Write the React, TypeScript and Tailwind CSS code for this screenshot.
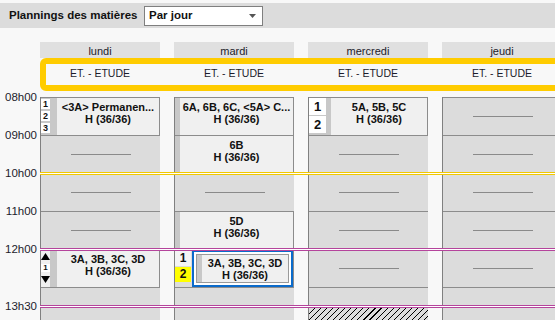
import React from "react";

const days = ["lundi", "mardi", "mercredi", "jeudi"];

function Dash() {
  return <div className="w-[60px] h-px bg-[#8a8a8a]" />;
}

function Slot38() {
  return (
    <div className="h-[38px] shrink-0 border-t border-[#8c8c8c] flex items-center justify-center">
      <Dash />
    </div>
  );
}

function Slot19() {
  return <div className="h-[19px] shrink-0 border-t border-[#8c8c8c]" />;
}

function SlotRest({ hatch = false }: { hatch?: boolean }) {
  return (
    <div className="h-[40px] shrink-0 border-t border-[#8c8c8c]">
      {hatch ? (
        <div className="h-full bg-[image:repeating-linear-gradient(135deg,#000_0px,#000_0.8px,transparent_0.8px,transparent_4.3px)]" />
      ) : null}
    </div>
  );
}

function Content({ l1, l2 }: { l1: string; l2: string }) {
  return (
    <div className="flex-1 min-w-0 bg-[#f0f0f0] pt-[3px] text-center text-[11px] leading-[12px] font-bold text-[#111] whitespace-nowrap overflow-hidden">
      <div>{l1}</div>
      <div>{l2}</div>
    </div>
  );
}

function Block({
  left,
  strip,
  l1,
  l2,
}: {
  left?: React.ReactNode;
  strip: React.ReactNode;
  l1: string;
  l2: string;
}) {
  return (
    <div className="h-[38px] shrink-0 border-t border-r border-[#8c8c8c] flex">
      {left}
      {strip}
      <Content l1={l1} l2={l2} />
    </div>
  );
}

const Strip5 = <div className="w-[5px] shrink-0 bg-[#c8c8c8]" />;
const Strip7 = <div className="w-[7px] shrink-0 bg-[#c8c8c8]" />;

function Nums3() {
  return (
    <div className="w-[9px] shrink-0 bg-[#c8c8c8] flex flex-col gap-[2px] pt-[1px]">
      {["1", "2", "3"].map((n) => (
        <div
          key={n}
          className="h-[10px] bg-white text-[9px] leading-[10px] font-bold text-center text-[#111]"
        >
          {n}
        </div>
      ))}
    </div>
  );
}

function NumsBig() {
  return (
    <div className="w-[17px] shrink-0 bg-[#c8c8c8] flex flex-col gap-[1px]">
      {["1", "2"].map((n) => (
        <div
          key={n}
          className="h-[17px] bg-white text-[13px] leading-[17px] font-bold text-center text-[#111]"
        >
          {n}
        </div>
      ))}
    </div>
  );
}

function Arrows() {
  return (
    <div className="w-[9px] shrink-0 bg-[#f0f0f0] flex flex-col items-center pt-[3px]">
      <svg width="9" height="7" viewBox="0 0 9 7">
        <path d="M4.5 0L9 7H0Z" fill="#000" />
      </svg>
      <div className="mt-[4px] w-[9px] h-[8px] bg-white text-[8px] leading-[8px] font-bold text-center text-[#111]">
        1
      </div>
      <svg className="mt-[4px]" width="9" height="7" viewBox="0 0 9 7">
        <path d="M0 0H9L4.5 7Z" fill="#000" />
      </svg>
    </div>
  );
}

function SelectedBlock() {
  return (
    <div className="h-[38px] shrink-0 border-t border-r border-[#8c8c8c] flex">
      <div className="w-[16px] shrink-0 flex flex-col gap-[1px] pt-[1px]">
        <div className="h-[15px] bg-[#f4f4f4] text-[12px] leading-[15px] font-bold text-center text-[#111]">
          1
        </div>
        <div className="h-[15px] bg-[#ffff00] text-[12px] leading-[15px] font-bold text-center text-[#111]">
          2
        </div>
      </div>
      <div className="w-px shrink-0" />
      <div className="flex-1 min-w-0 border-2 border-[#0b6bcb] bg-white p-[2px] flex">
        <div className="flex-1 min-w-0 border border-[#9a9a9a] flex">
          <div className="w-[5px] shrink-0 bg-[#c8c8c8]" />
          <div className="flex-1 min-w-0 bg-[#f0f0f0] pt-[2px] text-center text-[11px] leading-[12px] font-bold text-[#111] whitespace-nowrap overflow-hidden">
            <div>3A, 3B, 3C, 3D</div>
            <div>H (36/36)</div>
          </div>
        </div>
      </div>
    </div>
  );
}

function Col({ children }: { children: React.ReactNode }) {
  return (
    <div className="w-[120px] shrink-0 bg-[#dcdcdc] border-l border-[#808080] flex flex-col">
      {children}
    </div>
  );
}

export default function App() {
  return (
    <div className="w-[555px] h-[320px] overflow-hidden bg-[#f8f8f8] font-['Liberation_Sans',Arial,sans-serif] text-[#1c1c2c]">
      <div className="w-[620px] pt-[3px]">
        {/* top bar */}
        <div className="w-[555px] h-[25px] bg-[#dcdcdc] flex items-center pl-[9px]">
          <span className="w-[135px] shrink-0 text-[11.5px] font-bold text-[#111] whitespace-nowrap">
            Plannings des matières
          </span>
          <div className="w-[119px] h-[20px] bg-white border border-[#7f7f7f] flex items-center pl-[4px] pr-[6px]">
            <span className="flex-1 text-[11.5px] font-bold text-[#111]">Par jour</span>
            <svg width="7" height="4" viewBox="0 0 7 4">
              <path d="M0 0H7L3.5 4Z" fill="#555" />
            </svg>
          </div>
        </div>

        {/* day headers */}
        <div className="mt-[14px] flex pl-[40px] gap-[14px]">
          {days.map((d) => (
            <div
              key={d}
              className="w-[120px] shrink-0 h-[16px] pt-[1px] bg-[#e0e0e0] text-[11px] leading-[16px] text-center"
            >
              {d}
            </div>
          ))}
        </div>

        {/* yellow band */}
        <div className="ml-[40px] w-[522px] h-[33px] border-[6px] border-[#ffcc00] rounded-[6px]">
          <div className="-ml-[6px] flex gap-[14px]">
            {days.map((d) => (
              <div
                key={d}
                className="w-[120px] shrink-0 text-center text-[10.5px] leading-[18px]"
              >
                ET. - ETUDE
              </div>
            ))}
          </div>
        </div>

        {/* grid */}
        <div className="relative mt-[6px] flex">
          <div className="w-[40px] shrink-0 -mt-[7px] flex flex-col items-end pr-[3px] text-[11.5px] leading-[14px]">
            <div className="h-[14px]">08h00</div>
            <div className="h-[14px] mt-[24px]">09h00</div>
            <div className="h-[14px] mt-[24px]">10h00</div>
            <div className="h-[14px] mt-[24px]">11h00</div>
            <div className="h-[14px] mt-[24px]">12h00</div>
            <div className="h-[14px] mt-[43px]">13h30</div>
          </div>

          <div className="flex gap-[14px]">
            <Col>
              <Block left={<Nums3 />} strip={Strip7} l1="<3A> Permanen..." l2="H (36/36)" />
              <Slot38 />
              <Slot38 />
              <Slot38 />
              <Block left={<Arrows />} strip={Strip7} l1="3A, 3B, 3C, 3D" l2="H (36/36)" />
              <Slot19 />
              <SlotRest />
            </Col>
            <Col>
              <Block strip={Strip5} l1="6A, 6B, 6C, <5A> C..." l2="H (36/36)" />
              <Block strip={Strip5} l1="6B" l2="H (36/36)" />
              <Slot38 />
              <Block strip={Strip5} l1="5D" l2="H (36/36)" />
              <SelectedBlock />
              <Slot19 />
              <SlotRest />
            </Col>
            <Col>
              <Block left={<NumsBig />} strip={Strip5} l1="5A, 5B, 5C" l2="H (36/36)" />
              <Slot38 />
              <Slot38 />
              <Slot38 />
              <Slot38 />
              <Slot19 />
              <SlotRest hatch />
            </Col>
            <Col>
              <Slot38 />
              <Slot38 />
              <Slot38 />
              <Slot38 />
              <Slot38 />
              <Slot19 />
              <SlotRest />
            </Col>
          </div>

          {/* special time markers */}
          <div className="absolute left-[40px] right-0 top-[75px] h-[3px] border-y border-[#f2c800] bg-white" />
          <div className="absolute left-[40px] right-0 top-[151px] h-[3px] border-y border-[#b5449c] bg-white" />
          <div className="absolute left-[40px] right-0 top-[208px] h-[3px] border-y border-[#b5449c] bg-white" />
        </div>
      </div>
    </div>
  );
}
